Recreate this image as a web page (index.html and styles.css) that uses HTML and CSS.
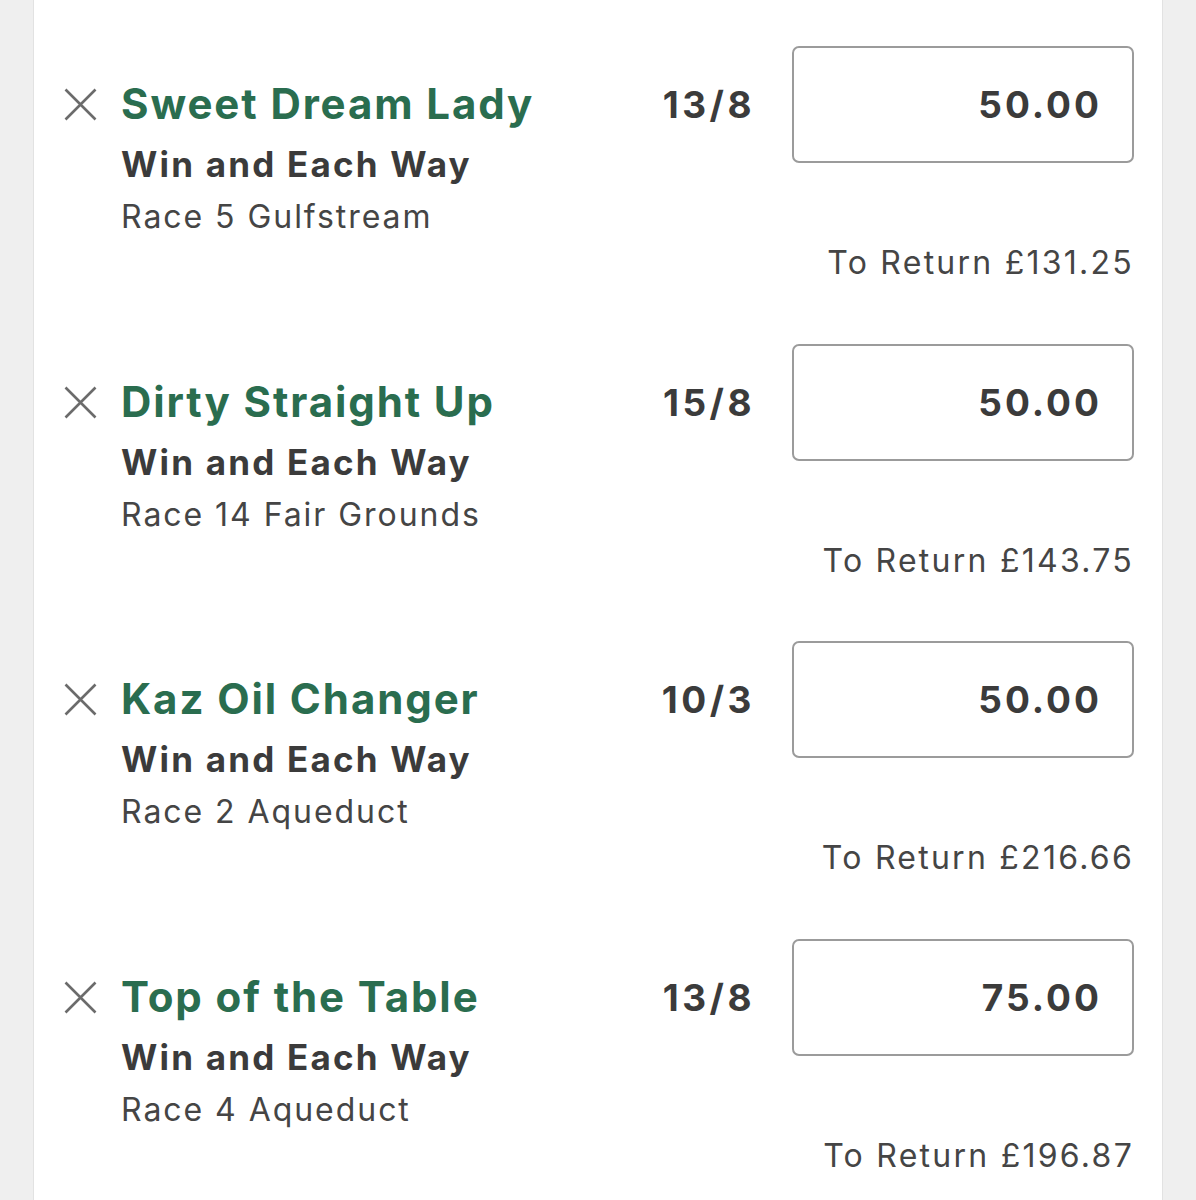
FILE: index.html
```html
<!DOCTYPE html>
<html lang="en">
<head>
<meta charset="utf-8">
<title>Bet slip</title>
<link rel="stylesheet" href="styles.css">
</head>
<body>
<main class="card">
  <section class="bet">
    <div class="left">
      <svg class="remove" viewBox="0 0 33 33" aria-hidden="true"><path d="M1.5 1.5 L31.5 31.5 M31.5 1.5 L1.5 31.5"/></svg>
      <div class="info">
        <div class="name">Sweet Dream Lady</div>
        <div class="market">Win and Each Way</div>
        <div class="race">Race 5 Gulfstream</div>
      </div>
    </div>
    <div class="right">
      <div class="stake-row">
        <div class="odds">13/8</div>
        <div class="stake">50.00</div>
      </div>
      <div class="return">To Return £131.25</div>
    </div>
  </section>
  <section class="bet">
    <div class="left">
      <svg class="remove" viewBox="0 0 33 33" aria-hidden="true"><path d="M1.5 1.5 L31.5 31.5 M31.5 1.5 L1.5 31.5"/></svg>
      <div class="info">
        <div class="name">Dirty Straight Up</div>
        <div class="market">Win and Each Way</div>
        <div class="race">Race 14 Fair Grounds</div>
      </div>
    </div>
    <div class="right">
      <div class="stake-row">
        <div class="odds">15/8</div>
        <div class="stake">50.00</div>
      </div>
      <div class="return">To Return £143.75</div>
    </div>
  </section>
  <section class="bet">
    <div class="left">
      <svg class="remove" viewBox="0 0 33 33" aria-hidden="true"><path d="M1.5 1.5 L31.5 31.5 M31.5 1.5 L1.5 31.5"/></svg>
      <div class="info">
        <div class="name">Kaz Oil Changer</div>
        <div class="market">Win and Each Way</div>
        <div class="race">Race 2 Aqueduct</div>
      </div>
    </div>
    <div class="right">
      <div class="stake-row">
        <div class="odds">10/3</div>
        <div class="stake">50.00</div>
      </div>
      <div class="return">To Return £216.66</div>
    </div>
  </section>
  <section class="bet">
    <div class="left">
      <svg class="remove" viewBox="0 0 33 33" aria-hidden="true"><path d="M1.5 1.5 L31.5 31.5 M31.5 1.5 L1.5 31.5"/></svg>
      <div class="info">
        <div class="name">Top of the Table</div>
        <div class="market">Win and Each Way</div>
        <div class="race">Race 4 Aqueduct</div>
      </div>
    </div>
    <div class="right">
      <div class="stake-row">
        <div class="odds">13/8</div>
        <div class="stake">75.00</div>
      </div>
      <div class="return">To Return £196.87</div>
    </div>
  </section>
</main>
</body>
</html>
```
FILE: styles.css
```css
html, body {
  margin: 0;
  padding: 0;
}
body {
  background: #efefef;
  font-family: Inter, "Liberation Sans", Arial, sans-serif;
  color: #3d3d3d;
  height: 1200px;
  overflow: hidden;
}
.card {
  width: 1130px;
  margin: 0 auto;
  background: #ffffff;
  border-left: 1px solid #e2e2e2;
  border-right: 1px solid #e2e2e2;
  padding: 46px 28px 0 30px;
  min-height: 1200px;
  box-sizing: border-box;
}
.bet {
  display: flex;
  justify-content: space-between;
  align-items: flex-start;
  height: 297.5px;
}
.left {
  display: flex;
  align-items: flex-start;
}
.remove {
  width: 33px;
  height: 33px;
  margin-top: 42px;
  flex: none;
}
.remove path {
  stroke: #6b6b6b;
  stroke-width: 2.6;
  fill: none;
}
.info {
  margin-left: 24px;
}
.name {
  font-size: 42px;
  font-weight: 700;
  line-height: 48px;
  margin-top: 34px;
  color: #2a6d4f;
  letter-spacing: 1.9px;
  white-space: nowrap;
}
.market {
  font-size: 35px;
  font-weight: 700;
  line-height: 44px;
  margin-top: 14px;
  color: #3b3b3b;
  letter-spacing: 2.2px;
  white-space: nowrap;
}
.race {
  font-size: 32px;
  font-weight: 400;
  line-height: 40px;
  margin-top: 11px;
  color: #454545;
  letter-spacing: 1.95px;
  white-space: nowrap;
}
.right {
  display: flex;
  flex-direction: column;
  align-items: flex-end;
}
.stake-row {
  display: flex;
  align-items: center;
}
.odds {
  font-size: 37px;
  font-weight: 700;
  color: #3b3b3b;
  margin-right: 37px;
  letter-spacing: 3.5px;
}
.stake {
  width: 342px;
  height: 117px;
  box-sizing: border-box;
  border: 2px solid #9b9b9b;
  border-radius: 7px;
  display: flex;
  align-items: center;
  justify-content: flex-end;
  padding-right: 30px;
  font-size: 37px;
  font-weight: 700;
  color: #3b3b3b;
  letter-spacing: 3px;
}
.return {
  font-size: 32px;
  line-height: 40px;
  margin-top: 80px;
  color: #454545;
  letter-spacing: 2.25px;
  white-space: nowrap;
}
```
